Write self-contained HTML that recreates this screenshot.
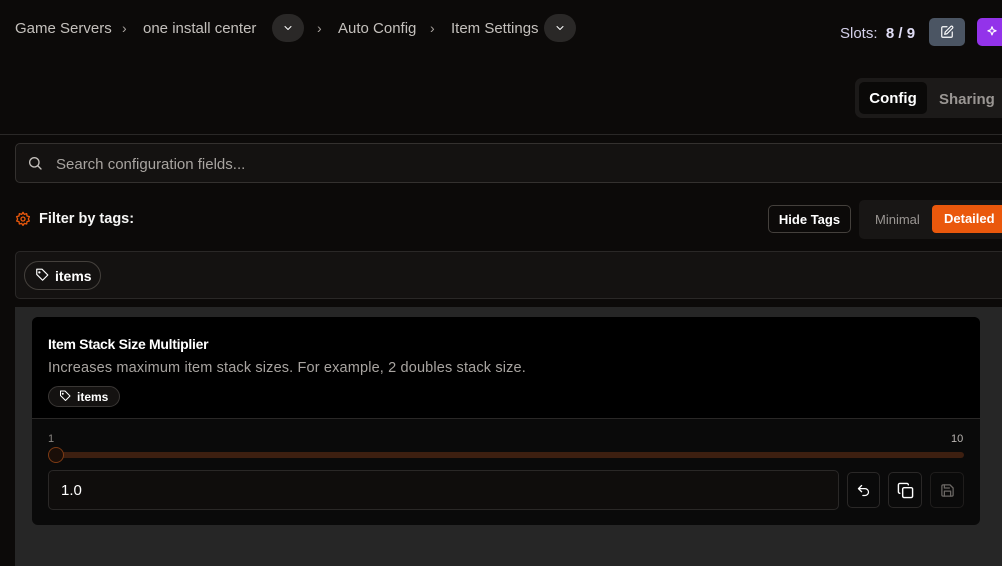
<!DOCTYPE html>
<html><head><meta charset="utf-8"><style>
*{box-sizing:border-box;margin:0;padding:0}
body{width:1002px;height:566px;overflow:hidden;background:#0c0a09;font-family:"Liberation Sans",sans-serif;color:#e7e5e4;position:relative}
.a{position:absolute}
.bc{font-size:15px;color:#c4c0bc;top:20px}
.chev{width:32px;height:28px;border-radius:14px;background:#2a2827;top:14px}
.sep{color:#a8a29e;font-size:14px;top:20px}
.ic{stroke:currentColor;fill:none;stroke-width:2;stroke-linecap:round;stroke-linejoin:round}
</style></head><body>
<div class="a bc" style="left:15px">Game Servers</div>
<div class="a sep" style="left:122px">&rsaquo;</div>
<div class="a bc" style="left:143px">one install center</div>
<div class="a chev" style="left:272px"><svg class="a ic" style="left:10px;top:8px;color:#fff" width="12" height="12" viewBox="0 0 24 24"><path d="M6 9l6 6 6-6"/></svg></div>
<div class="a sep" style="left:317px">&rsaquo;</div>
<div class="a bc" style="left:338px">Auto Config</div>
<div class="a sep" style="left:430px">&rsaquo;</div>
<div class="a bc" style="left:451px">Item Settings</div>
<div class="a chev" style="left:544px"><svg class="a ic" style="left:10px;top:8px;color:#fff" width="12" height="12" viewBox="0 0 24 24"><path d="M6 9l6 6 6-6"/></svg></div>

<div class="a" style="left:840px;top:25px;font-size:15px;color:#d4d0ea">Slots:&nbsp; <b style="color:#e0ddf5">8 / 9</b></div>
<div class="a" style="left:929px;top:18px;width:36px;height:28px;border-radius:5px;background:#4b5563"><svg class="a ic" style="left:11px;top:7px;color:#fff" width="14" height="14" viewBox="0 0 24 24"><path d="M12 3H5a2 2 0 0 0-2 2v14a2 2 0 0 0 2 2h14a2 2 0 0 0 2-2v-7"/><path d="M18.4 2.6a2 2 0 0 1 3 3L12 15l-4 1 1-4z"/></svg></div>
<div class="a" style="left:977px;top:18px;width:40px;height:28px;border-radius:5px;background:#9333ea"><svg class="a ic" style="left:8px;top:7px;color:#fff" width="14" height="14" viewBox="0 0 24 24"><path d="M12 3l2 5 5 2-5 2-2 5-2-5-5-2 5-2z"/></svg></div>

<div class="a" style="left:855px;top:78px;width:160px;height:40px;border-radius:7px;background:#1c1a19"></div>
<div class="a" style="left:859px;top:82px;width:68px;height:32px;border-radius:5px;background:#0a0908;color:#fff;font-weight:bold;font-size:15px;text-align:center;line-height:33px">Config</div>
<div class="a" style="left:939px;top:91px;color:#9a9693;font-weight:bold;font-size:15px">Sharing</div>

<div class="a" style="left:0;top:134px;width:1002px;height:1px;background:#2a2827"></div>
<div class="a" style="left:15px;top:143px;width:1000px;height:40px;border:1px solid #34312f;border-radius:5px;background:#141211"></div>
<svg class="a ic" style="left:27px;top:155px;color:#c4c0bc" width="16" height="16" viewBox="0 0 24 24"><circle cx="11" cy="11" r="7"/><path d="M21 21l-4.3-4.3"/></svg>
<div class="a" style="left:56px;top:156px;font-size:15px;color:#a8a4a0">Search configuration fields...</div>

<svg class="a ic" style="left:15px;top:211px;color:#ea580c" width="16" height="16" viewBox="0 0 24 24"><circle cx="12" cy="12" r="3"/><path d="M12 2l2 3 3.5-1 .5 3.5 3.5 1-1.5 3.5 1.5 3-3.5 1-.5 3.5-3.5-1-2 3-2-3-3.5 1-.5-3.5-3.5-1 1.5-3-1.5-3.5 3.5-1L6.5 4 10 5z"/></svg>
<div class="a" style="left:39px;top:211px;font-size:14.5px;font-weight:bold;color:#f5f5f4">Filter by tags:</div>
<div class="a" style="left:768px;top:205px;width:83px;height:28px;border:1px solid #44403c;border-radius:5px;font-size:13px;font-weight:bold;color:#fff;text-align:center;line-height:27px">Hide Tags</div>
<div class="a" style="left:859px;top:200px;width:150px;height:39px;border-radius:5px;background:#181615"></div>
<div class="a" style="left:875px;top:212px;font-size:13px;color:#9a9693">Minimal</div>
<div class="a" style="left:932px;top:205px;width:75px;height:28px;border-radius:4px;background:#ea580c;color:#fff;font-size:13px;font-weight:bold;line-height:28px;padding-left:12px">Detailed</div>

<div class="a" style="left:15px;top:251px;width:1000px;height:48px;border:1px solid #2a2827;border-radius:5px;background:#141211"></div>
<div class="a" style="left:24px;top:261px;width:77px;height:29px;border:1px solid #44403c;border-radius:15px;font-size:14px;font-weight:bold;color:#fff;line-height:28px;padding-left:30px">items</div>
<svg class="a ic" style="left:35px;top:268px;color:#fff" width="14" height="14" viewBox="0 0 24 24"><path d="M12 2H3v9l10 10 9-9z"/><circle cx="7.5" cy="7.5" r="1"/></svg>

<div class="a" style="left:15px;top:307px;width:1000px;height:259px;background:#262626"></div>
<div class="a" style="left:32px;top:317px;width:948px;height:208px;border-radius:6px;background:#0a0a0a;overflow:hidden">
<div class="a" style="left:0;top:0;width:948px;height:102px;background:#000;border-bottom:1px solid #2a2827"></div>
<div class="a" style="left:16px;top:19px;font-size:14px;font-weight:bold;color:#fff;letter-spacing:-0.3px">Item Stack Size Multiplier</div>
<div class="a" style="left:16px;top:43px;font-size:14.5px;color:#a8a4a0;letter-spacing:0.15px">Increases maximum item stack sizes. For example, 2 doubles stack size.</div>
<div class="a" style="left:16px;top:69px;width:72px;height:21px;border:1px solid #3a3735;border-radius:11px;background:#141211;font-size:12px;font-weight:bold;color:#fff;line-height:20px;padding-left:28px">items</div>
<svg class="a ic" style="left:27px;top:73px;color:#fff" width="12" height="12" viewBox="0 0 24 24"><path d="M12 2H3v9l10 10 9-9z"/><circle cx="7.5" cy="7.5" r="1"/></svg>
<div class="a" style="left:16px;top:116px;font-size:11px;color:#8a8682">1</div>
<div class="a" style="left:919px;top:116px;font-size:11px;color:#b8b4b0">10</div>
<div class="a" style="left:16px;top:135px;width:916px;height:6px;border-radius:3px;background:#3d1f10"></div>
<div class="a" style="left:16px;top:130px;width:16px;height:16px;border-radius:50%;border:1.5px solid #7c3a14;background:#1a0e08"></div>
<div class="a" style="left:16px;top:153px;width:791px;height:40px;border:1px solid #2a2827;border-radius:5px;background:#0f0d0c;font-size:15px;color:#fff;line-height:40px;padding-left:12px">1.0</div>
<div class="a" style="left:815px;top:155px;width:33px;height:36px;border:1px solid #2a2827;border-radius:5px"><svg class="a ic" style="left:8px;top:10px;color:#fff" width="15" height="15" viewBox="0 0 24 24"><path d="M9 14L4 9l5-5"/><path d="M4 9h10.5a5.5 5.5 0 0 1 0 11H11"/></svg></div>
<div class="a" style="left:856px;top:155px;width:34px;height:36px;border:1px solid #2a2827;border-radius:5px"><svg class="a ic" style="left:8px;top:9px;color:#fff" width="17" height="17" viewBox="0 0 24 24"><rect x="8" y="8" width="14" height="14" rx="2"/><path d="M4 16c-1.1 0-2-.9-2-2V4c0-1.1.9-2 2-2h10c1.1 0 2 .9 2 2"/></svg></div>
<div class="a" style="left:898px;top:155px;width:34px;height:36px;border:1px solid #1f1d1c;border-radius:5px"><svg class="a ic" style="left:9px;top:10px;color:#6b6764" width="15" height="15" viewBox="0 0 24 24"><path d="M19 21H5a2 2 0 0 1-2-2V5a2 2 0 0 1 2-2h11l5 5v11a2 2 0 0 1-2 2z"/><path d="M17 21v-8H7v8M7 3v5h8"/></svg></div>
</div>
</body></html>
